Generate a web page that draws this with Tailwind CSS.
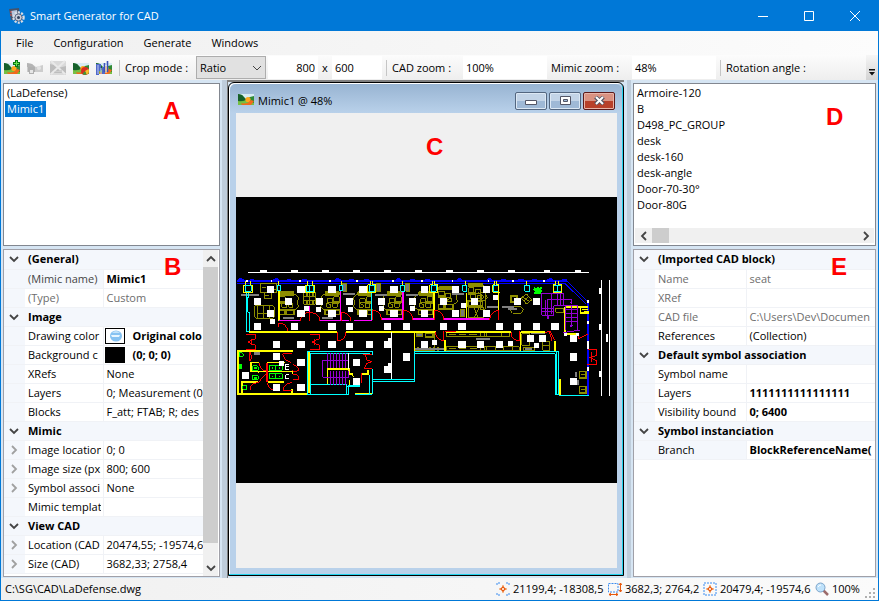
<!DOCTYPE html>
<html lang="en">
<head>
<meta charset="utf-8">
<title>Smart Generator for CAD</title>
<script src="https://cdn.jsdelivr.net/npm/@tailwindcss/browser@4"></script>
</head>
<body class="h-screen overflow-hidden bg-[#d6e5f3] font-['Open_Sans','Noto_Sans',sans-serif] text-[11px] leading-4 text-black">
<svg class="hidden">
  <symbol id="pic" viewBox="0 0 16 16"><path d="M0 3h16v10H0z" fill="#d8ecf2"/><path d="M0 3l4 1 4 4 4-2 4-1v8H0z" fill="#2f8a35"/><path d="M0 3l4 1 4 5-8 2z" fill="#17602b"/><path d="M0 10q5 1 8-1l8 3v2H0z" fill="#76c043"/><circle cx="10" cy="8.500" r="2.600" fill="#ffa51c"/><path d="M3 12q6 2 10-3l3 1-3 4H4z" fill="#f26a1b"/></symbol>
  <symbol id="down" viewBox="0 0 10 10"><path d="M1 3l4 4 4-4" fill="none" stroke="#444" stroke-width="1.8"/></symbol>
  <symbol id="right" viewBox="0 0 10 10"><path d="M3 1l4 4-4 4" fill="none" stroke="#a0a0a0" stroke-width="1.8"/></symbol>
</svg>
<div class="flex h-full flex-col border border-[#0078d7]">
  <header class="flex h-[30px] shrink-0 items-center bg-[#0078d7] pl-2 text-white">
    <svg class="size-4" viewBox="0 0 16 16"><path d="M0 1l10-1 1 11-9 1z" fill="#46536b"/><path d="M2 3l6-1 1 7-5 1z" fill="#b5c4dc"/><circle cx="9.500" cy="9.500" r="5" fill="none" stroke="#d9dde6" stroke-width="2.500" stroke-dasharray="2 1.200"/><circle cx="9.500" cy="9.500" r="3.600" fill="#c8cfdd" stroke="#5d6780"/><circle cx="9.500" cy="9.500" r="1.500" fill="#31405c"/><path d="M1 4h2M1 7h2" stroke="#e4574a"/></svg>
    <h1 class="ml-[5px] flex-1">Smart Generator for CAD</h1>
    <button aria-label="Minimize" class="flex h-full w-[46px] items-center justify-center"><svg class="size-[10px]" viewBox="0 0 10 10"><path d="M0 5.500h10" stroke="#fff"/></svg></button>
    <button aria-label="Maximize" class="flex h-full w-[46px] items-center justify-center"><svg class="size-[10px]" viewBox="0 0 10 10"><path d="M.5.5h9v9h-9z" fill="none" stroke="#fff"/></svg></button>
    <button aria-label="Close" class="flex h-full w-[46px] items-center justify-center"><svg class="size-[10px]" viewBox="0 0 10 10"><path d="M0 0l10 10M10 0L0 10" stroke="#fff"/></svg></button>
  </header>
  <nav class="flex h-6 shrink-0 items-center gap-5 bg-linear-to-r from-[#f0f0f0] to-[#fcfcfc] pl-[15px]">
    <button>File</button><button>Configuration</button><button>Generate</button><button>Windows</button>
  </nav>
  <div class="flex h-[25px] shrink-0 items-center bg-linear-to-b from-[#fcfcfc] to-[#eeeeee] pl-[3px]">
    <div class="flex gap-[7px]">
      <button aria-label="Add mimic"><svg class="size-4" viewBox="0 0 16 16"><use href="#pic"/><path d="M12.500 0v7M9 3.500h7" stroke="#087a10" stroke-width="3"/><path d="M12.500 1v5M10 3.500h5" stroke="#67e34f"/></svg></button>
      <button aria-label="Duplicate mimic" disabled><svg class="size-4" viewBox="0 0 16 16"><path d="M0 3l5 1 4 3 7-2v7H0z" fill="#cdcdcd"/><path d="M0 3l5 1 3 3H0z" fill="#b4b4b4"/><path d="M1 7h7v5H7v2H2v-2H1z" fill="#b0b0b0"/><path d="M3 10h3v3H3z" fill="#e6e6e6"/><circle cx="12" cy="8" r="2" fill="#e4e4e4"/></svg></button>
      <button aria-label="Delete mimic" disabled><svg class="size-4" viewBox="0 0 16 16"><path d="M0 1h16v14H0z" fill="#dadada"/><path d="M0 4l4 1 4 3 8-2v7H0z" fill="#bdbdbd"/><path d="M1 1l14 13M15 1L1 14" stroke="#e9e9e9" stroke-width="2"/><path d="M4 11q4 1 8-2v3H5z" fill="#cfcfcf"/></svg></button>
      <button aria-label="Mimic colors"><svg class="size-4" viewBox="0 0 16 16"><use href="#pic"/><circle cx="12" cy="11" r="4" fill="#d72e20"/><path d="M12 11l3.500-2a4 4 0 0 1-2 5.500z" fill="#f5c52c"/><path d="M12 11l1.500 3.500a4 4 0 0 1-4-.5z" fill="#3e9c37"/></svg></button>
      <button aria-label="Find in mimic"><svg class="size-4" viewBox="0 0 16 16"><use href="#pic"/><path d="M0 4h5v7H3v4H0zM6 7h3v7H6z" fill="#5068c8"/><path d="M2 5v9M5 8v6" stroke="#c3cdf5"/><path d="M8.500 3v9M11.500 1v11" stroke="#3c50b8" stroke-width="1.600"/><path d="M10 5v8" stroke="#e8ecff"/></svg></button>
    </div>
    <span class="mr-[5px] ml-[7px] h-4 w-px bg-[#c5c5c5]"></span>
    <label for="crop" class="w-[71px] whitespace-nowrap">Crop mode :</label>
    <div class="relative h-[23px] w-[70px] shrink-0">
      <select id="crop" class="size-full appearance-none border border-[#adadad] bg-[#e1e1e1] pl-[3px]"><option>Ratio</option></select>
      <svg class="pointer-events-none absolute top-[7px] right-1 size-[10px]" viewBox="0 0 10 10"><path d="M1 3l4 4 4-4" fill="none" stroke="#444"/></svg>
    </div>
    <input aria-label="Crop width" value="800" class="ml-[2px] h-[23px] w-[50px] min-w-0 bg-white pr-[3px] text-right">
    <span class="w-[14px] text-center">x</span>
    <input aria-label="Crop height" value="600" class="h-[23px] w-[50px] min-w-0 bg-white pl-[3px]">
    <span class="mr-[5px] ml-1 h-4 w-px bg-[#c5c5c5]"></span>
    <label for="cz" class="w-[71px] whitespace-nowrap">CAD zoom :</label>
    <input id="cz" value="100%" class="h-[23px] w-[84px] min-w-0 bg-white pl-[3px]">
    <label for="mz" class="ml-1 w-[81px] whitespace-nowrap">Mimic zoom :</label>
    <input id="mz" value="48%" class="h-[23px] w-[84px] min-w-0 bg-white pl-[3px]">
    <span class="mr-[5px] ml-1 h-4 w-px bg-[#c5c5c5]"></span>
    <span class="flex-1 whitespace-nowrap">Rotation angle :</span>
    <button aria-label="More tools" class="flex h-full w-3 items-end justify-center bg-linear-to-b from-[#f6f6f6] to-[#d4d4d4] pb-1"><svg class="h-[7px] w-[6px]" viewBox="0 0 6 7"><path d="M0 0h6v1.500H0zM0 3h6L3 6.500z" fill="#111"/></svg></button>
  </div>

  <main class="flex min-h-0 flex-1">
    <aside class="ml-[2px] flex w-[217px] shrink-0 flex-col gap-[3px] pt-[3px] pb-px">
      <section class="relative h-[163px] border border-[#828790] bg-white p-px" aria-label="Mimics">
        <ul>
          <li><button class="px-[2px]">(LaDefense)</button></li>
          <li><button class="bg-[#0078d7] px-[2px] text-white">Mimic1</button></li>
        </ul>
        <b class="absolute top-[11px] left-[159px] font-['Liberation_Sans',sans-serif] text-2xl text-[#f00]">A</b>
      </section>
      <section class="relative flex min-h-0 flex-1 overflow-hidden border border-[#a0a0a8] bg-white pr-px" aria-label="Mimic properties">
        <div class="min-w-0 flex-1 overflow-hidden">
        <table class="w-full table-fixed border-collapse text-left whitespace-nowrap [&_td]:overflow-hidden [&_th]:overflow-hidden [&_tr]:h-[19px] [&_tr]:border-b [&_tr]:border-[#f0f2f6] [&_td:nth-child(2)]:border-r [&_td:nth-child(2)]:border-[#f0f2f6] [&_td:nth-child(3)]:pl-[3px] [&_td:nth-child(2)]:pl-[3px] [&_th]:pl-[3px] [&_td]:leading-[18px] [&_th]:leading-[18px]">
          <colgroup><col class="w-[21px]"><col class="w-[78px]"><col></colgroup>
          <tbody>
            <tr class="bg-[#f4f7fc]"><td><button aria-label="Collapse" class="block pl-[5px]"><svg class="size-[10px]"><use href="#down"/></svg></button></td><th colspan="2">(General)</th></tr>
            <tr><td class="bg-[#f4f7fc]"></td><td class="bg-[#f4f7fc] text-[#444]">(Mimic name)</td><td class="font-bold">Mimic1</td></tr>
            <tr class="text-[#6d6d6d]"><td class="bg-[#f4f7fc]"></td><td>(Type)</td><td>Custom</td></tr>
            <tr class="bg-[#f4f7fc]"><td><button aria-label="Collapse" class="block pl-[5px]"><svg class="size-[10px]"><use href="#down"/></svg></button></td><th colspan="2">Image</th></tr>
            <tr><td class="bg-[#f4f7fc]"></td><td>Drawing color</td><td class="font-bold"><div class="-ml-[2px] flex items-center gap-2"><svg class="h-4 w-5 shrink-0 border border-black bg-white" viewBox="0 0 18 14"><ellipse cx="10" cy="7" rx="6" ry="5.500" fill="#86c2f2"/><path d="M5 6h9l-1 2H6z" fill="#e8f6ff"/><path d="M6 4q4-4 8 0z" fill="#c2e2f9"/></svg><span>Original colo</span></div></td></tr>
            <tr><td class="bg-[#f4f7fc]"></td><td><div class="w-[73px] overflow-hidden">Background c</div></td><td class="font-bold"><div class="-ml-[2px] flex items-center gap-2"><span class="h-4 w-5 shrink-0 bg-black"></span><span>(0; 0; 0)</span></div></td></tr>
            <tr><td class="bg-[#f4f7fc]"></td><td>XRefs</td><td>None</td></tr>
            <tr><td class="bg-[#f4f7fc]"></td><td>Layers</td><td>0; Measurement (0)</td></tr>
            <tr><td class="bg-[#f4f7fc]"></td><td>Blocks</td><td>F_att; FTAB; R; des</td></tr>
            <tr class="bg-[#f4f7fc]"><td><button aria-label="Collapse" class="block pl-[5px]"><svg class="size-[10px]"><use href="#down"/></svg></button></td><th colspan="2">Mimic</th></tr>
            <tr><td class="bg-[#f4f7fc]"><button aria-label="Expand" class="block pl-[5px]"><svg class="size-[10px]"><use href="#right"/></svg></button></td><td><div class="w-[73px] overflow-hidden">Image location</div></td><td>0; 0</td></tr>
            <tr><td class="bg-[#f4f7fc]"><button aria-label="Expand" class="block pl-[5px]"><svg class="size-[10px]"><use href="#right"/></svg></button></td><td>Image size (px</td><td>800; 600</td></tr>
            <tr><td class="bg-[#f4f7fc]"><button aria-label="Expand" class="block pl-[5px]"><svg class="size-[10px]"><use href="#right"/></svg></button></td><td>Symbol associ</td><td>None</td></tr>
            <tr><td class="bg-[#f4f7fc]"></td><td><div class="w-[73px] overflow-hidden">Mimic template</div></td><td></td></tr>
            <tr class="bg-[#f4f7fc]"><td><button aria-label="Collapse" class="block pl-[5px]"><svg class="size-[10px]"><use href="#down"/></svg></button></td><th colspan="2">View CAD</th></tr>
            <tr><td class="bg-[#f4f7fc]"><button aria-label="Expand" class="block pl-[5px]"><svg class="size-[10px]"><use href="#right"/></svg></button></td><td>Location (CAD</td><td>20474,55; -19574,6</td></tr>
            <tr><td class="bg-[#f4f7fc]"><button aria-label="Expand" class="block pl-[5px]"><svg class="size-[10px]"><use href="#right"/></svg></button></td><td>Size (CAD)</td><td>3682,33; 2758,4</td></tr>
          </tbody>
        </table>
        </div>
        <div class="flex w-[15px] shrink-0 flex-col bg-[#f0f0f0]">
          <button aria-label="Scroll up" class="flex h-[17px] items-center justify-center"><svg class="size-[10px] rotate-180"><use href="#down"/></svg></button>
          <div class="flex-1 bg-[#cdcdcd]"></div>
          <div class="h-4"></div>
          <button aria-label="Scroll down" class="flex h-[17px] items-center justify-center"><svg class="size-[10px]"><use href="#down"/></svg></button>
        </div>
        <b class="absolute top-px left-[160px] font-['Liberation_Sans',sans-serif] text-2xl text-[#f00]">B</b>
      </section>
    </aside>

    <div class="ml-[2px] w-[5px] shrink-0 bg-[#bfcddb]"></div>

    <section class="flex min-w-0 flex-1 flex-col border-t-2 border-l border-[#808080] pb-[2px]" aria-label="Mimic1">
      <div class="flex min-h-0 flex-1 flex-col rounded-t-md border border-black bg-[#b9d1ea] pr-[6px] pb-[7px] pl-[7px] shadow-[inset_-1px_-1px_0_#22d3ee,inset_1px_1px_0_#fff]">
        <div class="-mr-[5px] -ml-[6px] mt-px flex h-[29px] shrink-0 items-center rounded-t-md bg-linear-to-b from-[#98b4d2] to-[#b9d1ea] pr-[7px] pl-2">
          <svg class="mr-1 size-4"><use href="#pic"/></svg>
          <h2 class="flex-1 pt-1">Mimic1 @ 48%</h2>
          <div class="flex gap-[2px] pt-1">
            <button aria-label="Minimize" class="flex h-[18px] w-8 items-center justify-center rounded-xs border border-[#53667f] bg-linear-to-b from-[#c3d4e7] from-50% to-[#9fb9d6] to-50% shadow-[inset_0_0_0_1px_#dce8f4]"><svg class="mt-1 h-[5px] w-3" viewBox="0 0 12 5"><path d="M.5.5h11v4H.5z" fill="#fff" stroke="#535666"/></svg></button>
            <button aria-label="Restore" class="flex h-[18px] w-8 items-center justify-center rounded-xs border border-[#53667f] bg-linear-to-b from-[#c3d4e7] from-50% to-[#9fb9d6] to-50% shadow-[inset_0_0_0_1px_#dce8f4]"><svg class="h-[9px] w-[11px]" viewBox="0 0 11 9"><path d="M.5.5h10v8H.5z" fill="#fff" stroke="#535666"/><path d="M3.500 3.500h4v2h-4z" fill="#9fb9d6" stroke="#535666"/></svg></button>
            <button aria-label="Close" class="flex h-[18px] w-8 items-center justify-center rounded-xs border border-[#5c1a1a] bg-linear-to-b from-[#d99282] from-50% to-[#b8402a] to-50% shadow-[inset_0_0_0_1px_#e8b4a8]"><svg class="h-[9px] w-[11px]" viewBox="0 0 11 9"><path d="M1.500 1l8 7M9.500 1l-8 7" stroke="#535666" stroke-width="4"/><path d="M2 1l7 7M9 1L2 8" stroke="#fff" stroke-width="2"/></svg></button>
          </div>
        </div>
        <div class="relative flex min-h-0 flex-1 items-center bg-[#f0f0f0] pb-px">
          <b class="absolute top-[18px] left-[190px] font-['Liberation_Sans',sans-serif] text-2xl text-[#f00]">C</b>
          <svg class="w-full bg-black" viewBox="236 197 381 286" fill="none" shape-rendering="crispEdges" role="img" aria-label="CAD floor plan">
            <defs>
              <g id="desk" stroke="#8d8d00" stroke-width="3">
                <path d="M0 0h42v10H0z" fill="#8d8d00"/>
                <path d="M42 6q18 8 12 18t0 16-12 14M0 14h16v14H0zM20 20h16v12H20zM6 34h14v12H6zM26 38l12-4v12H26z"/>
                <path d="M0 28h20v6H0z" fill="#8d8d00"/>
                <path d="M-1 54h16v14H-1zM18 54h24v14H18z" stroke-width="5"/>
              </g>
            </defs>
            <path d="M248 272.500H589M601.500 280v116M609.500 280v116" stroke="#fff"/>
            <path d="M260 271h7M291 271h7M322 271h7M353 271h7M384 271h7M415 271h7M446 271h7M477 271h7M508 271h7M544 271h6M575 271h6M600 288v6M600 324v6M600 371v6M607 334v8" stroke="#fff" stroke-width="2"/>
            <path d="M237 281H567" stroke="#00f" stroke-width="2"/>
            <path d="M588 302V396" stroke="#00f" stroke-width="2"/>
            <path d="M237 283.500H565L586 304M567 281L588 302" stroke="#00f"/>
            <path d="M238 279.500h6M239 278.500h3M250 279.500h4M273 279.500h6M275 278.500h3M287 279.500h4M302 279.500h5M335 279.500h6M336 278.500h3M349 279.500h5M364 279.500h5M396 279.500h5M397 278.500h3M410 279.500h5M425 279.500h5M457 279.500h5M458 278.500h3M487 279.500h5M488 278.500h3M501 279.500h5M518 279.500h6M532 279.500h5M547 279.500h6M549 278.500h3M562 279.500h5" stroke="#00f"/>
            <path d="M246 281h2M271 281h1M299 281h2M329 281h2M356 281h2M392 281h2M421 281h2M452 281h1M488 281h1M512 281h2M543 281h2M588 300v3M588 321v3M588 341v8M588 367v4" stroke="#fff" stroke-width="2"/>

            <g transform="translate(230 260) scale(.333333)" stroke-width="3">
              <use href="#desk" x="150" y="96"/>
              <use href="#desk" transform="translate(328 96) scale(-1 1)"/>
              <use href="#desk" transform="translate(426 96) scale(-1 1)"/>
              <g stroke="#8d8d00">
                <path d="M92 70h48v28H92zM103 98h22v18h-22zM78 136h50l6 6v28l-6 5H78l-5-6v-28zM84 136v38M120 136v38M100 136v38"/>
                <path d="M95 82h14M103 106h14M125 88h12M84 162h36"/>
                <path d="M222 97h34v36h-34zM240 97v36M222 109h34M222 121h34"/>
                <path d="M230 99v8M248 99v8M230 123v8M248 123v8" stroke-width="6"/>
                <path d="M338 70h12v24h-12z" fill="#777"/>
              </g>
              <path d="M33 106h54M158 175h34M276 175h32M338 103h38M72 281h17" stroke="#808080" stroke-width="7"/>
              <path d="M51 94v122M57 94v18h-3v45h5v59M51 216h10" stroke="#0ff"/>
              <path d="M46 76h18v18H46zM142 76h10v16h-10zM229 76h22v18h-22zM240 76v18M329 76h10v16h-10z" stroke="#0ff"/>
              <path d="M40 98V76h6V64M68 98V76h-6V64M40 97h28M226 98V76h8V64M255 98V76h-8V64M226 97h30M147 64v10M334 64v10" stroke="#ff0"/>
              <path d="M147 94v90M57 216H322M348 216h42M21 273h167M24 271v132M22 402H234M188 335H63V308h23M112 308h54M157 335h31v7M36 403v-37h48M115 366h48M86 332v6M237 272v128M186 388v14M293 374v-46h65v14h10" stroke="#ff0" stroke-width="5"/>
              <path d="M147 182h63M270 182h86M371 182h19M239 138v42M332 94v88" stroke="#f0f" stroke-width="5"/>
              <path d="M147 190q24 0 26 24M147 190v10M239 157q30 2 30 25M239 157v25M239 157q-27 2-28 26M334 157q28 2 28 26M334 157v26M323 216v26q24-1 25-26" stroke="red"/>
              <path d="M48 223h28v13l-22 10 22 10v13H48M64 236v20M240 223h28v13l-22 10 22 10v13h-28M255 236v20M60 275v28M60 303l5-12-5-16M87 309q6 23 22 24M60 390q0-20 26-23M85 367l25-27M112 368q3 22 26 24M158 281h29M158 281q4 21 26 26M188 314q17 2 18 18-17 5-18-1M188 342q18 0 18 15-15 5-18 0M159 393h27M159 393q2-23 26-25" stroke="red"/>
              <path d="M112 308v58" stroke="red" stroke-width="5"/>
              <path d="M234 274h156M243 280h147M234 274v130h9V280M240 404h117v-28h33M243 375h108v28M351 380h39" stroke="#0ff"/>
              <path d="M293 280v44M302 280v44M311 280v44M320 280v44M329 280v44M338 280v44M347 280v44M278 301h77v26M278 301v51h78v-18M302 332v42M311 332v42M320 332v42M329 332v42M338 332v42M347 332v42" stroke="#9400d3"/>
              <path d="M355 280v46M167 312v18M167 313h10M168 321h8M168 330h10M167 344v14M167 345h10M168 357h10" stroke="#fff"/>
              <path d="M68 318h14l5 7-5 7H68zM68 346h14l5 7-5 6H68zM38 378h13v10H38zM118 316h39v15h-39zM118 342h39v15h-39zM137 316v15M137 342v15M28 278q12-2 13 6t-13 6z" stroke="#0f0"/>
              <path d="M125 322h5v5h-5zM146 322h5v5h-5zM125 347h5v5h-5zM146 347h5v5h-5zM73 322h8v6h-8zM73 350h8v6h-8zM26 312h10v14H26z" fill="#0f0"/>
              <path d="M360 342h8l2 10M360 360v15" stroke="#ff0"/>
              <path d="M111 77h21v21h-21zM72 114h21v21H72zM111 150h21v21h-21zM72 189h21v21H72zM165 114h21v21h-21zM201 77h24v21h-24zM201 150h24v21h-24zM183 189h21v21h-21zM257 114h21v21h-21zM294 77h24v21h-24zM222 138h16v14h-16zM294 150h24v21h-24zM294 189h24v21h-24zM348 114h21v21h-21zM348 189h21v21h-21zM129 243h21v21h-21zM201 243h24v21h-24zM294 243h24v21h-24zM348 243h21v21h-21zM129 279h21v21h-21zM147 303h14v14h-14zM201 297h24v21h-24zM36 336h21v21H36zM129 372h21v21h-21zM201 372h24v21h-24zM369 298h21v21h-21zM369 354h21v21h-21zM120 177h16v14h-16zM259 141h15v14h-15zM354 141h15v14h-15z" fill="#fff"/>
            </g>

            <g transform="translate(355 260) scale(.333333)" stroke-width="3">
              <use href="#desk" transform="translate(139 96) scale(-1 1)"/>
              <use href="#desk" transform="translate(233 96) scale(-1 1)"/>
              <use href="#desk" x="252" y="80"/>
              <use href="#desk" x="341" y="70"/>
              <g stroke="#8d8d00">
                <path d="M341 142h46v32h-46zM356 142l14 32M372 142l-14 32M368 96l18 14-8 12M180 218h60v53h-60zM274 218h116v12H274zM274 260h116v12H274z"/>
                <path d="M212 220h22v12h-22zM282 224h20M312 224h20M342 224h24M282 266h20M312 266h22M346 266h20M190 262v10M202 262v10M214 262v10M226 262v10M238 262v10M250 262v10" stroke-width="5"/>
                <path d="M64 70h14v24H64zM153 70h12v24h-12zM318 148h12v22h-12zM184 221h20v10h-20z" fill="#777"/>
              </g>
              <path d="M60 106h36M152 106h36M292 101h35M181 267h85M362 238h28" stroke="#808080" stroke-width="6"/>
              <path d="M43 76h16v18H43zM137 76h12v18h-12zM229 76h15v18h-15zM324 76h12v18h-12z" stroke="#0ff"/>
              <path d="M38 98V74h8V62M62 98V74h-8V62M38 97h24M224 98V74h8V62M248 98V74h-8V62M224 97h24M143 64v10M331 64v10" stroke="#ff0"/>
              <path d="M50 98v84" stroke="#0ff" stroke-width="5"/>
              <path d="M237 96v84M335 98v80M0 216h242M179 216v56M270 240v32M272 216h118M40 330v12H22M44 345v58M0 402h50" stroke="#ff0" stroke-width="5"/>
              <path d="M0 182h50M80 177h64M173 177h64M268 177h122M144 95v84" stroke="#f0f" stroke-width="5"/>
              <path d="M54 180v-29q24 1 26 29M146 180v-29q26 2 27 29M239 180v-29q26 2 28 29M241 215q2 24 25 27v-28M270 215h32M52 284H25M30 284l6 16 14 5-14 5-8 16h24M20 340v28" stroke="red"/>
              <path d="M0 274h52v10M0 280h46M52 327v76H0M43 345v56M52 358h126V276h212M52 364h127V281h211" stroke="#0ff"/>
              <path d="M109 217v140" stroke="#fff"/>
              <path d="M12 78h24v21H12zM69 114h21v21H69zM12 150h24v21H12zM105 78h24v21h-24zM105 150h24v21h-24zM162 114h21v21h-21zM198 78h21v21h-21zM198 150h21v21h-21zM255 114h21v21h-21zM291 78h21v21h-21zM291 150h21v21h-21zM348 114h21v21h-21zM87 189h21v21H87zM144 189h21v21h-21zM255 189h21v21h-21zM309 189h24v21h-24zM33 243h21v21H33zM87 243h21v21H87zM98 235h10v8H98zM144 279h21v24h-21zM87 318h21v21H87zM98 309h10v10H98zM198 243h21v21h-21zM309 243h24v21h-24zM366 243h21v21h-21zM318 129h15v15h-15zM72 138h15v15H72zM165 138h15v15h-15zM231 240h15v15h-15z" fill="#fff"/>
            </g>

            <g transform="translate(480 260) scale(.333333)" stroke-width="3">
              <path d="M0 98h16v50H0zM92 107h22v22H92zM124 114l16-12 15 18-16 12zM90 150l10-12 22 2 8 8-6 12H98zM227 145h24v12h-24zM126 222h24v34h-24zM188 246h22v25h-22z" stroke="#8d8d00"/>
              <path d="M0 218h88v12H0zM0 260h118v12H0zM20 218v12M66 218v12M20 260v12M46 260v12M72 260v12M98 260v12M130 262h34v10h-34zM126 110l22 14M132 124l14-16M302 345h16M302 390h16M190 258h20" stroke="#8d8d00"/>
              <path d="M299 335h20v20h-20zM299 380h20v20h-20zM94 109h18v18H94z" stroke="#8d8d00" stroke-width="5"/>
              <path d="M20 142h34M67 142h35M84 148h28M154 219h42M0 238h30M134 268h22M288 336v16M294 360v16" stroke="#808080" stroke-width="6"/>
              <path d="M40 76h16v18H40zM134 76h15v18h-15zM220 76h24v18h-24zM232 76v18" stroke="#0ff"/>
              <path d="M38 97V74h6V62M57 97V74h-6V62M38 97h22M141 62v14M220 97V74h8V62M245 97V74h-8V62M220 97h25M57 97v78" stroke="#ff0"/>
              <path d="M0 216h92M122 216v56M122 216h72M226 242v30M256 142v80M253 222h40M256 142h68M302 144v16h24M240 358v48" stroke="#ff0" stroke-width="5"/>
              <path d="M306 150h18M312 154h14" stroke="#ff0"/>
              <path d="M0 177h30" stroke="#f0f" stroke-width="5"/>
              <path d="M57 180v-30q-26 4-28 30M94 215v15l16 12h8v-28M196 218l14-5 14 28M208 215l8 27M296 220v16l28-14M324 270h26v17l-22 5 22 10v12h-28M335 275v32" stroke="red"/>
              <path d="M185 100h66v37h44M185 100v66h37v-28M204 118h70v12M204 118v58M214 100v62M232 100v35M243 100v35M185 146h35M185 155h35M258 138v72M294 138v72M258 150h36M258 161h36M258 173h36M258 185h36M276 138v60M250 218l50-8M196 120v46M222 136h36" stroke="#9400d3"/>
              <path d="M269 125h10l-5 7zM269 196h10l-5 7zM200 168h8v8h-8z" fill="#9400d3"/>
              <path d="M163 82l7 2 4-6 4 6 8-4-2 10 4 6-6 2 2 6-10-2-6 2-6-4 2-6-4-6z" fill="#0f0"/>
              <path d="M0 275h236v131h90M0 281h226v124h10M230 275v131" stroke="#0ff"/>
              <path d="M9 78h21v21H9zM9 150h21v21H9zM102 114h21v21h-21zM159 114h21v21h-21zM48 189h21v21H48zM102 189h21v21h-21zM159 189h21v21h-21zM213 189h24v21h-24zM141 225h21v21h-21zM177 225h21v21h-21zM270 225h21v21h-21zM48 243h21v21H48zM84 243h15v15H84zM162 249h15v15h-15zM270 279h21v24h-21zM270 354h21v21h-21zM0 243h12v21H0zM39 105h15v15H39zM252 219h9v9h-9zM288 219h9v9h-9z" fill="#fff"/>
            </g>
          </svg>
        </div>
      </div>
    </section>

    <div class="ml-[3px] w-1 shrink-0 bg-[#bfcddb]"></div>

    <aside class="mr-[2px] ml-[2px] flex w-[243px] shrink-0 flex-col gap-[3px] pt-[3px] pb-px">
      <section class="relative flex h-[163px] flex-col justify-between border border-[#828790] bg-white p-px" aria-label="CAD blocks">
        <ul>
          <li><button class="px-[2px]">Armoire-120</button></li>
          <li><button class="px-[2px]">B</button></li>
          <li><button class="px-[2px]">D498_PC_GROUP</button></li>
          <li><button class="px-[2px]">desk</button></li>
          <li><button class="px-[2px]">desk-160</button></li>
          <li><button class="px-[2px]">desk-angle</button></li>
          <li><button class="px-[2px]">Door-70-30°</button></li>
          <li><button class="px-[2px]">Door-80G</button></li>
        </ul>
        <div class="mb-px flex h-[15px] bg-[#f0f0f0]">
          <button aria-label="Scroll left" class="flex w-[17px] items-center justify-center"><svg class="size-[10px] rotate-90"><use href="#down"/></svg></button>
          <div class="w-[17px] bg-[#cdcdcd]"></div>
          <div class="flex-1"></div>
          <button aria-label="Scroll right" class="flex w-[17px] items-center justify-center"><svg class="size-[10px] -rotate-90"><use href="#down"/></svg></button>
        </div>
        <b class="absolute top-[17px] left-[192px] font-['Liberation_Sans',sans-serif] text-2xl text-[#f00]">D</b>
      </section>
      <section class="relative min-h-0 flex-1 overflow-hidden border border-[#a0a0a8] bg-white" aria-label="Block properties">
        <table class="w-full table-fixed border-collapse text-left whitespace-nowrap [&_td]:overflow-hidden [&_th]:overflow-hidden [&_tr]:h-[19px] [&_tr]:border-b [&_tr]:border-[#f0f2f6] [&_td:nth-child(2)]:border-r [&_td:nth-child(2)]:border-[#f0f2f6] [&_td:nth-child(3)]:pl-[3px] [&_td:nth-child(2)]:pl-[3px] [&_th]:pl-[3px] [&_td]:leading-[18px] [&_th]:leading-[18px]">
          <colgroup><col class="w-[21px]"><col class="w-[91px]"><col></colgroup>
          <tbody>
            <tr class="bg-[#f4f7fc]"><td><button aria-label="Collapse" class="block pl-[5px]"><svg class="size-[10px]"><use href="#down"/></svg></button></td><th colspan="2">(Imported CAD block)</th></tr>
            <tr class="text-[#6d6d6d]"><td class="bg-[#f4f7fc]"></td><td>Name</td><td>seat</td></tr>
            <tr class="text-[#6d6d6d]"><td class="bg-[#f4f7fc]"></td><td>XRef</td><td></td></tr>
            <tr class="text-[#6d6d6d]"><td class="bg-[#f4f7fc]"></td><td>CAD file</td><td>C:\Users\Dev\Documen</td></tr>
            <tr><td class="bg-[#f4f7fc]"></td><td>References</td><td>(Collection)</td></tr>
            <tr class="bg-[#f4f7fc]"><td><button aria-label="Collapse" class="block pl-[5px]"><svg class="size-[10px]"><use href="#down"/></svg></button></td><th colspan="2">Default symbol association</th></tr>
            <tr><td class="bg-[#f4f7fc]"></td><td>Symbol name</td><td></td></tr>
            <tr><td class="bg-[#f4f7fc]"></td><td>Layers</td><td class="font-bold">1111111111111111</td></tr>
            <tr><td class="bg-[#f4f7fc]"></td><td>Visibility bound</td><td class="font-bold">0; 6400</td></tr>
            <tr class="bg-[#f4f7fc]"><td><button aria-label="Collapse" class="block pl-[5px]"><svg class="size-[10px]"><use href="#down"/></svg></button></td><th colspan="2">Symbol instanciation</th></tr>
            <tr><td class="bg-[#f4f7fc]"></td><td class="bg-[#f4f7fc]">Branch</td><td class="font-bold">BlockReferenceName(</td></tr>
          </tbody>
        </table>
        <b class="absolute top-px left-[197px] font-['Liberation_Sans',sans-serif] text-2xl text-[#f00]">E</b>
      </section>
    </aside>
  </main>

  <footer class="flex h-[22px] shrink-0 items-center bg-linear-to-r from-[#f0f0f0] to-[#fbfbfb] pr-[2px] pl-1 whitespace-nowrap">
    <span class="flex-1">C:\SG\CAD\LaDefense.dwg</span>
    <div class="flex items-center gap-[3px]">
      <svg class="size-[14px]" viewBox="0 0 14 14"><path d="M4 1H1v3M10 1h3v3M4 13H1v-3M10 13h3v-3" fill="none" stroke="#3b8cf0" stroke-dasharray="2 1"/><path d="M7 3v8M3 7h8" stroke="#f08030"/><path d="M7 4l3 3-3 3-3-3z" fill="#e8590c"/><circle cx="7" cy="7" r="1" fill="#fff"/></svg>
      <span class="w-[92px]">21199,4; -18308,5</span>
      <svg class="size-[14px]" viewBox="0 0 14 14"><path d="M.5 1.500h9.500v8.500H.5z" fill="none" stroke="#3b8cf0" stroke-dasharray="2 1"/><path d="M12.500 1v9M11 3l1.500-2L14 3M11 8l1.500 2L14 8M1 12.500h9M3 11l-2 1.500L3 14M8 11l2 1.500L8 14" fill="none" stroke="#e8590c"/></svg>
      <span class="w-[75px]">3682,3; 2764,2</span>
      <svg class="size-[14px]" viewBox="0 0 14 14"><path d="M1 1h12v12H1z" fill="none" stroke="#3b8cf0" stroke-dasharray="2 1"/><path d="M7 3v8M3 7h8" stroke="#f08030"/><path d="M7 4l3 3-3 3-3-3z" fill="#e8590c"/><circle cx="7" cy="7" r="1" fill="#fff"/></svg>
      <span class="w-[92px]">20479,4; -19574,6</span>
      <svg class="size-[14px]" viewBox="0 0 14 14"><path d="M8 8l5 5" stroke="#9c6b6b" stroke-width="2.500"/><circle cx="5.500" cy="5.500" r="4.500" fill="#bfe2fb" stroke="#7da4c9"/><path d="M3 5q1-2 3-2" stroke="#fff" fill="none"/></svg>
      <span class="w-[30px]">100%</span>
      <svg class="mt-2 size-[11px]" viewBox="0 0 11 11"><path d="M8 0h2v2H8zM4 4h2v2H4zM8 4h2v2H8zM0 8h2v2H0zM4 8h2v2H4zM8 8h2v2H8z" fill="#b0b0b0"/></svg>
    </div>
  </footer>
</div>
</body>
</html>
